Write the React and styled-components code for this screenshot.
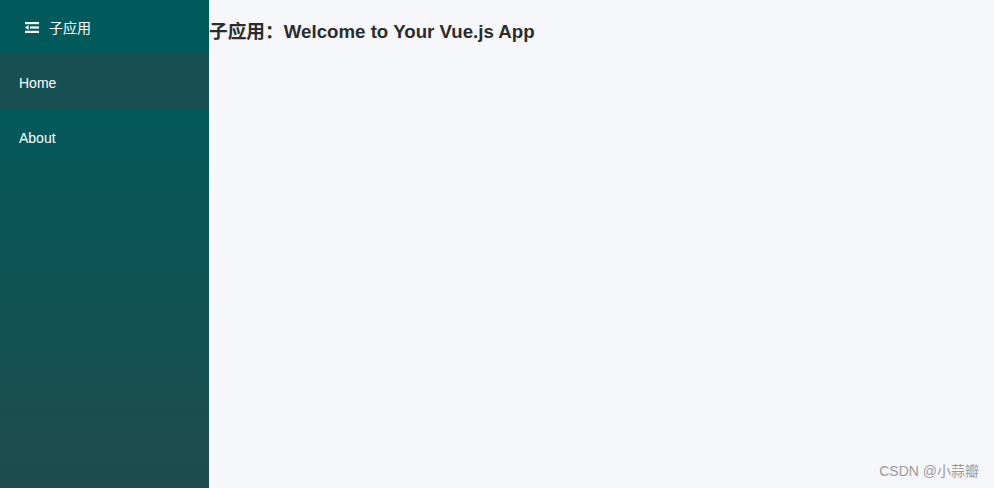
import React from "react";
import styled, { createGlobalStyle } from "styled-components";

const GlobalStyle = createGlobalStyle`
html, body {
margin: 0;
padding: 0;
background: #f5f7fa;
font-family: "Liberation Sans", Arial, "Noto Sans CJK SC", sans-serif;
}
`;

const Layout = styled.div`
display: flex;
width: 994px;
height: 488px;
position: relative;
`;

const Aside = styled.aside`
width: 209px;
display: flex;
flex-direction: column;
background: linear-gradient(180deg, #035a5c 0%, #035a5c 20%, #1f4c4e 100%);
`;

const Brand = styled.div`
height: 54px;
display: flex;
align-items: center;
padding-left: 25px;
gap: 10px;
background: #005a5c;
color: #fff;
font-size: 14px;
`;

const MenuItem = styled.div`
height: 55px;
box-sizing: border-box;
padding: 3px 0 0 19px;
display: flex;
align-items: center;
color: #fff;
font-size: 14px;
background: ${(props) => (props.active ? "#174f52" : "transparent")};
cursor: pointer;
`;

const Main = styled.main`
flex: 1;
`;

const Title = styled.h1`
margin: 16px 0 0;
font-size: 18.7px;
font-weight: bold;
color: #2c2c2c;
`;

const Watermark = styled.div`
position: absolute;
right: 15px;
bottom: 8px;
font-size: 14px;
color: #9a9a9a;
`;

const FoldIcon = () => (
  <svg width="14" height="11" viewBox="0 0 14 11" fill="#fff">
    <rect x="0" y="0" width="14" height="2.2" />
    <rect x="5" y="4.4" width="9" height="2.2" />
    <rect x="0" y="8.8" width="14" height="2.2" />
    <polygon points="0,5.5 3.6,3 3.6,8" />
  </svg>
);

export default function App() {
  return (
    <>
      <GlobalStyle />
      <Layout>
        <Aside>
          <Brand>
            <FoldIcon />
            子应用
          </Brand>
          <MenuItem active>Home</MenuItem>
          <MenuItem>About</MenuItem>
        </Aside>
        <Main>
          <Title>子应用：Welcome to Your Vue.js App</Title>
        </Main>
        <Watermark>CSDN @小蒜瓣</Watermark>
      </Layout>
    </>
  );
}
